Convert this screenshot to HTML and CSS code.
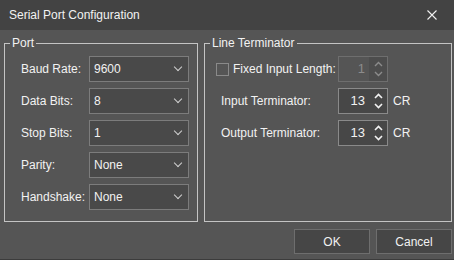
FILE: index.html
```html
<!DOCTYPE html>
<html lang="en">

<head>
    <meta charset="UTF-8">
    <title>Serial Port Configuration</title>
    <link rel="stylesheet" href="styles.css">
</head>

<body>
    <div class="window">
        <div class="titlebar">
            <span class="title">Serial Port Configuration</span>
            <svg class="close" width="10" height="10" viewBox="0 0 10 10">
                <path d="M0.5 0.5L9.5 9.5M9.5 0.5L0.5 9.5" stroke="#f2f2f2" stroke-width="1.1" fill="none" />
            </svg>
        </div>
        <div class="main">
            <fieldset class="group port">
                <legend>Port</legend>
                <div class="row">
                    <label>Baud Rate:</label>
                    <div class="combo"><span>9600</span><i class="chev"></i></div>
                </div>
                <div class="row">
                    <label>Data Bits:</label>
                    <div class="combo"><span>8</span><i class="chev"></i></div>
                </div>
                <div class="row">
                    <label>Stop Bits:</label>
                    <div class="combo"><span>1</span><i class="chev"></i></div>
                </div>
                <div class="row">
                    <label>Parity:</label>
                    <div class="combo"><span>None</span><i class="chev"></i></div>
                </div>
                <div class="row">
                    <label>Handshake:</label>
                    <div class="combo"><span>None</span><i class="chev"></i></div>
                </div>
            </fieldset>
            <fieldset class="group term">
                <legend>Line Terminator</legend>
                <div class="row">
                    <label class="check"><span class="box"></span>Fixed Input Length:</label>
                    <div class="spin disabled">
                        <span class="val">1</span>
                        <span class="arrows">
                            <svg width="9" height="20" viewBox="0 0 9 20">
                                <path d="M1 7L4.5 3.5L8 7M1 13L4.5 16.5L8 13" stroke="#8c8c8c" stroke-width="1.4" fill="none" />
                            </svg>
                        </span>
                    </div>
                </div>
                <div class="row">
                    <label class="lbl">Input Terminator:</label>
                    <div class="spin">
                        <span class="val">13</span>
                        <span class="arrows">
                            <svg width="9" height="20" viewBox="0 0 9 20">
                                <path d="M1 7L4.5 3.5L8 7M1 13L4.5 16.5L8 13" stroke="#f2f2f2" stroke-width="1.6" fill="none" />
                            </svg>
                        </span>
                    </div>
                    <span class="unit">CR</span>
                </div>
                <div class="row">
                    <label class="lbl">Output Terminator:</label>
                    <div class="spin">
                        <span class="val">13</span>
                        <span class="arrows">
                            <svg width="9" height="20" viewBox="0 0 9 20">
                                <path d="M1 7L4.5 3.5L8 7M1 13L4.5 16.5L8 13" stroke="#f2f2f2" stroke-width="1.6" fill="none" />
                            </svg>
                        </span>
                    </div>
                    <span class="unit">CR</span>
                </div>
            </fieldset>
        </div>
        <div class="buttons">
            <button class="btn">OK</button>
            <button class="btn">Cancel</button>
        </div>
    </div>
</body>

</html>
```

FILE: styles.css
```css
body {
    margin: 0px;
    background-color: #555555;
    font: 12px/16px "Liberation Sans", sans-serif;
    color: #f2f2f2;
}

.window {
    width: 454px;
    height: 260px;
    background-color: #555555;
    border-bottom: 1px solid #3c3c3c;
    box-sizing: border-box;
    display: flex;
    flex-direction: column;
}

.titlebar {
    height: 30px;
    flex: none;
    background-color: #434343;
    display: flex;
    align-items: center;
    justify-content: space-between;
    padding: 0px 17px 0px 9px;
}

.main {
    display: flex;
    gap: 6px;
    padding: 5px 2px 0px 4px;
}

.group {
    margin: 0px;
    padding: 5px 0px 8px 16px;
    border: 1px solid #c4c4c4;
    display: flex;
    flex-direction: column;
    gap: 6px;
    height: 187px;
    box-sizing: border-box;
}

.group legend {
    padding: 0px 2px;
    margin-left: -11px;
    line-height: 16px;
}

.port {
    width: 194px;
}

.term {
    width: 248px;
    padding-left: 11px;
}

.term legend {
    margin-left: -6px;
}

.row {
    display: flex;
    align-items: center;
    height: 26px;
    white-space: nowrap;
}

.row label {
    width: 68px;
    flex: none;
}

.combo {
    width: 100px;
    height: 26px;
    box-sizing: border-box;
    border: 1px solid #7c7c7c;
    background-color: #494949;
    display: flex;
    align-items: center;
    justify-content: space-between;
    padding: 0px 7px 0px 4px;
}

.chev {
    width: 5px;
    height: 5px;
    border-right: 1px solid #d0d0d0;
    border-bottom: 1px solid #d0d0d0;
    transform: translateY(-2px) rotate(45deg);
}

.term .row label {
    width: 122px;
}

.term .lbl {
    padding-left: 5px;
    box-sizing: border-box;
}

.check {
    display: flex;
    align-items: center;
    gap: 4px;
}

.box {
    width: 13px;
    height: 13px;
    box-sizing: border-box;
    border: 1px solid #8a8a8a;
}

.spin {
    width: 50px;
    height: 26px;
    box-sizing: border-box;
    border: 1px solid #8a8a8a;
    background-color: #474747;
    display: flex;
    align-items: center;
}

.spin .val {
    flex: 1;
    text-align: right;
    padding-right: 4px;
    font-size: 13px;
}

.spin .arrows {
    width: 18px;
    height: 24px;
    display: flex;
    align-items: center;
    justify-content: center;
}

.spin.disabled {
    border-color: #6e6e6e;
    background-color: #555555;
    color: #8c8c8c;
}

.spin.disabled .arrows {
    background-color: #4d4d4d;
}

.unit {
    margin-left: 5px;
}

.buttons {
    display: flex;
    justify-content: flex-end;
    gap: 6px;
    padding: 7px 2px 0px 0px;
}

.btn {
    width: 76px;
    height: 25px;
    background-color: #464646;
    border: 1px solid #6e6e6e;
    color: #f2f2f2;
    font: 12px "Liberation Sans", sans-serif;
    padding: 0px;
}
```
